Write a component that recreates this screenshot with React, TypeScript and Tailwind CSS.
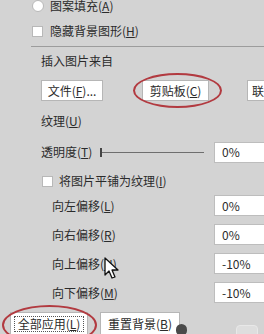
import React from "react";

function Key({ k }: { k: string }) {
  return (
    <>
      (<span className="underline underline-offset-[1px]">{k}</span>)
    </>
  );
}

function Box({ className = "" }: { className?: string }) {
  return (
    <div
      className={`h-[11px] w-[11px] shrink-0 border border-[#b8b8b8] bg-white ${className}`}
    />
  );
}

function Field({ value }: { value: string }) {
  return (
    <div className="ml-auto flex h-[21px] w-[50px] items-center border border-[#bdbdbd] border-r-0 bg-white pl-[7px] text-[12px] text-[#2b2b2b]">
      {value}
    </div>
  );
}

const offsets = [
  { label: "向左偏移", k: "L", value: "0%" },
  { label: "向右偏移", k: "R", value: "0%" },
  { label: "向上偏移", k: "N", value: "-10%" },
  { label: "向下偏移", k: "M", value: "-10%" },
];

export default function App() {
  return (
    <div
      className="relative h-[334px] w-[264px] overflow-hidden bg-[#d3d3d3] text-[12px] leading-none text-[#2b2b2b]"
      style={{ fontFamily: '"Noto Sans CJK SC", "Noto Sans", sans-serif' }}
    >
      <div className="flex flex-col">
        {/* radio row (top clipped) */}
        <div className="-mt-[2px] flex h-[16px] items-center pl-[32px]">
          <div className="h-[12px] w-[12px] shrink-0 rounded-full border border-[#b8b8b8] bg-white" />
          <span className="ml-[6px]">
            图案填充<Key k="A" />
          </span>
        </div>

        {/* hide background */}
        <div className="mt-[10px] flex h-[14px] items-center pl-[32px]">
          <Box />
          <span className="ml-[7px]">
            隐藏背景图形<Key k="H" />
          </span>
        </div>

        <div className="ml-[31px] mt-[8px] h-px bg-[#9c9c9c]" />

        <div className="mt-[9px] flex h-[10px] items-center pl-[41px]">插入图片来自</div>

        {/* source buttons */}
        <div className="mt-[14px] flex h-[21px] items-stretch pl-[41px]">
          <div className="flex w-[64px] items-center justify-center border border-[#b6b6b6] bg-white">
            文件<Key k="F" />...
          </div>
          <div className="ml-[39px] flex w-[69px] items-center justify-center border border-[#b6b6b6] bg-white">
            剪贴板<Key k="C" />
          </div>
          <div className="ml-[38px] flex flex-1 items-center border border-r-0 border-[#b6b6b6] bg-white pl-[4px]">
            联
          </div>
        </div>

        <div className="mt-[14px] flex h-[12px] items-center pl-[41px]">
          纹理<Key k="U" />
        </div>

        {/* transparency */}
        <div className="mt-[15px] flex h-[20px] items-center pl-[41px]">
          <span>
            透明度<Key k="T" />
          </span>
          <div className="relative ml-[8px] flex h-[10px] w-[104px] items-center">
            <div className="h-px w-full bg-[#6e6e6e]" />
            <div className="absolute left-0 h-[9px] w-[2px] bg-[#444]" />
          </div>
          <Field value="0%" />
        </div>

        {/* tile checkbox */}
        <div className="mt-[12px] flex h-[14px] items-center pl-[42px]">
          <Box />
          <span className="ml-[6px]">
            将图片平铺为纹理<Key k="I" />
          </span>
        </div>

        {/* offsets */}
        <div className="mt-[7px] flex flex-col gap-[8px]">
          {offsets.map((o) => (
            <div key={o.k} className="flex h-[21px] items-center pl-[52px]">
              <span>
                {o.label}
                <Key k={o.k} />
              </span>
              <Field value={o.value} />
            </div>
          ))}
        </div>

        {/* bottom buttons */}
        <div className="mt-[9px] flex h-[24px] pl-[10px]">
          <div className="flex w-[78px] items-center justify-center border border-[#b6b6b6] bg-white">
            <div className="flex h-[16px] items-center border border-dotted border-[#555] px-[3px]">
              全部应用<Key k="L" />
            </div>
          </div>
          <div className="ml-[12px] flex w-[80px] items-center justify-center border border-[#b6b6b6] bg-white">
            重置背景<Key k="B" />
          </div>
        </div>
      </div>

      {/* red ellipses */}
      <div className="absolute left-[133px] top-[73px] h-[35px] w-[89px] rounded-[50%] border-2 border-[#b23a40]" />
      <div className="absolute left-[2px] top-[305px] h-[40px] w-[95px] rounded-[50%] border-2 border-[#b23a40]" />

      {/* smudge near bottom */}
      <div className="absolute left-[176px] top-[324px] h-[12px] w-[11px] rounded-full bg-[#4a4a4a]" />
      <div className="absolute left-[236px] top-[325px] h-[10px] w-[22px] rounded-t-[4px] border border-[#e8e8e8] bg-[#dedede]" />

      {/* mouse cursor */}
      <svg
        className="absolute left-[104px] top-[257px]"
        width="16"
        height="24"
        viewBox="0 0 16 24"
      >
        <path
          d="M1 1 L1 18 L5 14 L8 21 L11 20 L8 13 L14 13 Z"
          fill="#fff"
          stroke="#111"
          strokeWidth="1.3"
          strokeLinejoin="round"
        />
      </svg>
    </div>
  );
}
